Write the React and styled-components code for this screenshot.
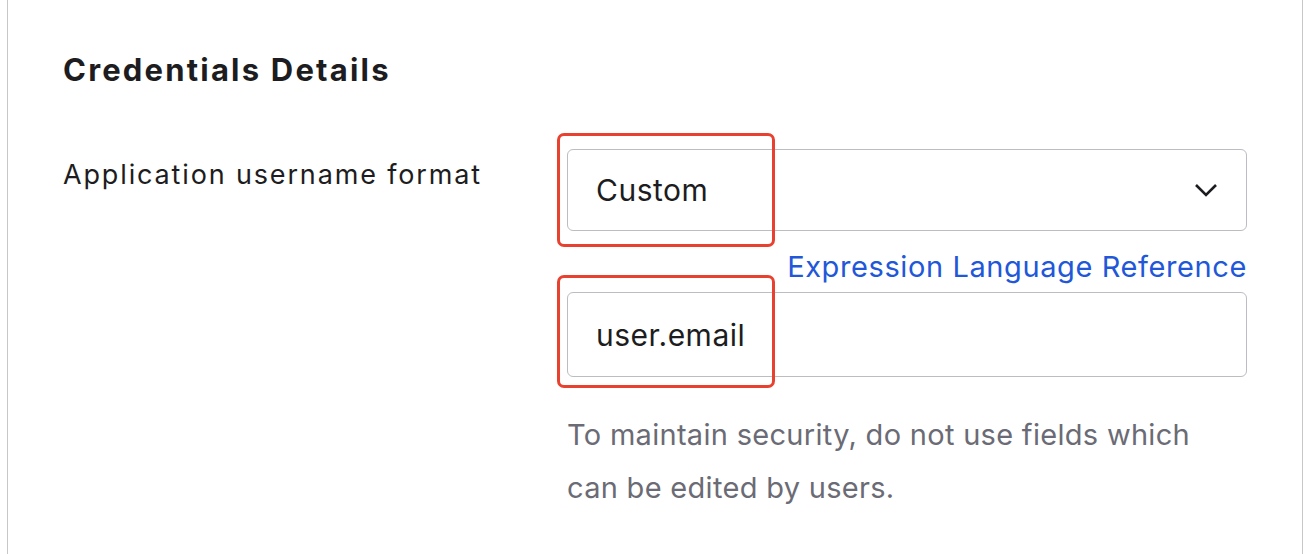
import React from 'react'
import styled, { createGlobalStyle } from 'styled-components'

const GlobalStyle = createGlobalStyle`
  html, body {
    margin: 0;
    padding: 0;
    background: #ffffff;
  }
  body {
    font-family: Inter, "Noto Sans", Arial, sans-serif;
    color: #1d1d21;
  }
`

const Panel = styled.section`
  box-sizing: border-box;
  margin-left: 7px;
  width: 1296px;
  height: 554px;
  border-left: 1px solid #c6c6cb;
  border-right: 1px solid #c6c6cb;
  padding: 52px 55px 0 55px;
`

const Heading = styled.h2`
  margin: 0 0 61px 0;
  font-size: 31px;
  font-weight: 700;
  line-height: 36px;
  letter-spacing: 2.2px;
  color: #1d1d21;
`

const Row = styled.div`
  display: grid;
  grid-template-columns: 504px 680px;
`

const Label = styled.div`
  padding-top: 8px;
  font-size: 27px;
  line-height: 36px;
  letter-spacing: 1.85px;
  color: #1d1d21;
`

const Fields = styled.div`
  display: flex;
  flex-direction: column;
`

const FieldWrap = styled.div`
  position: relative;
`

const Box = styled.div`
  box-sizing: border-box;
  height: ${({ h }) => h}px;
  border: 1px solid #bcbcc2;
  border-radius: 6px;
  display: flex;
  align-items: center;
  justify-content: space-between;
  padding: 0 28px 0 28px;
  font-size: 30px;
  letter-spacing: 0.5px;
  color: #1d1d21;
`

const Highlight = styled.div`
  position: absolute;
  left: -10px;
  top: ${({ top }) => top}px;
  width: 218px;
  height: ${({ h }) => h}px;
  box-sizing: border-box;
  border: 3px solid #e8412f;
  border-radius: 7px;
  pointer-events: none;
`

const LinkRow = styled.div`
  display: flex;
  justify-content: flex-end;
  padding: 18px 0 7px 0;
`

const RefLink = styled.a`
  font-size: 29px;
  line-height: 36px;
  letter-spacing: 0.6px;
  color: #2157d8;
  text-decoration: none;
`

const Help = styled.p`
  margin: 31px 0 0 0;
  font-size: 29px;
  line-height: 53px;
  letter-spacing: 0.3px;
  color: #6b6b75;
  max-width: 650px;
`

const Chevron = () => (
  <svg width="24" height="16" viewBox="0 0 24 16" fill="none">
    <path d="M2 3 L12 13 L22 3" stroke="#1d1d21" strokeWidth="2.6" />
  </svg>
)

export default function App() {
  return (
    <>
      <GlobalStyle />
      <Panel>
        <Heading>Credentials Details</Heading>
        <Row>
          <Label>Application username format</Label>
          <Fields>
            <FieldWrap>
              <Box h={82}>
                <span>Custom</span>
                <Chevron />
              </Box>
              <Highlight top={-16} h={114} />
            </FieldWrap>
            <LinkRow>
              <RefLink href="#">Expression Language Reference</RefLink>
            </LinkRow>
            <FieldWrap>
              <Box h={85}>
                <span>user.email</span>
              </Box>
              <Highlight top={-17} h={113} />
            </FieldWrap>
            <Help>To maintain security, do not use fields which can be edited by users.</Help>
          </Fields>
        </Row>
      </Panel>
    </>
  )
}
